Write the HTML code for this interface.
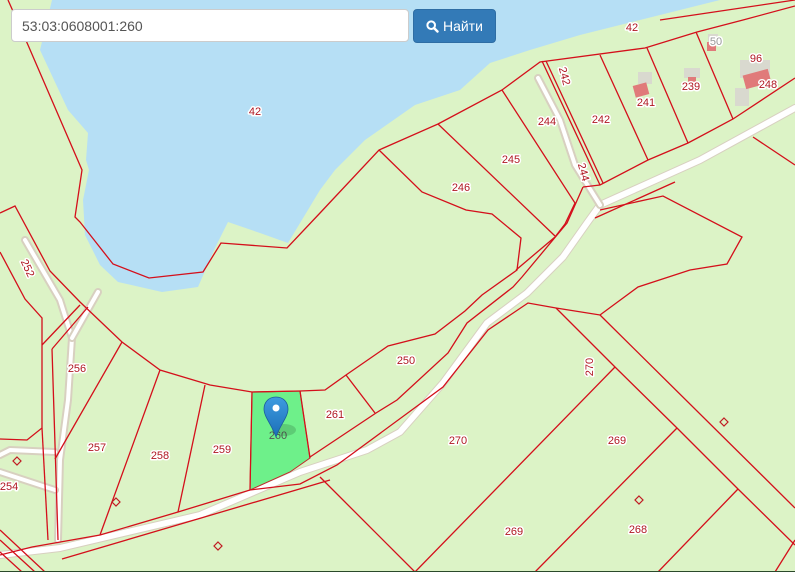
<!DOCTYPE html>
<html><head><meta charset="utf-8"><style>
html,body{margin:0;padding:0;width:795px;height:572px;overflow:hidden;background:#dcf3c6;font-family:"Liberation Sans",sans-serif}
svg{position:absolute;left:0;top:0}
.l{fill:none;stroke:#d40f1b;stroke-width:1.3}
.t{font-family:"Liberation Sans",sans-serif;font-size:11px;fill:#b01822;stroke:#fff;stroke-width:3px;paint-order:stroke;stroke-linejoin:round;text-anchor:middle}
.rd{fill:none;stroke:#d8d0c0;stroke-width:8;stroke-linejoin:round;stroke-linecap:round}
.rw{fill:none;stroke:#fff;stroke-width:6;stroke-linejoin:round;stroke-linecap:round}
#inp{position:absolute;left:11px;top:9px;width:398px;height:33px;border:1px solid #ccc;border-radius:4px;background:#fff;box-sizing:border-box;font-size:14px;color:#555;padding:8px 10px;line-height:16px}
#btn{position:absolute;left:413px;top:9px;width:83px;height:34px;border-radius:4px;background:#337ab7;border:1px solid #2e6da4;box-sizing:border-box;color:#fff;font-size:14px;line-height:32px;text-align:center}
</style></head><body>
<svg width="795" height="572" viewBox="0 0 795 572">
<rect width="795" height="572" fill="#dcf3c6"/>
<path d="M52,0 L40,50 L68,110 L88,133 L86,160 L89,170 L83,200 L85,235 L100,265 L118,282 L162,292 L198,287 L215,248 L228,222 L260,233 L288,243 L320,190 L335,170 L365,140 L415,105 L460,90 L490,63 L530,50 L580,35 L640,20 L700,5 L720,0 Z" fill="#b6dff5"/>
<g>
<path class="rd" d="M0,555 L60,548 L200,515 L300,472 L367,450 L400,432 L443,383 L487,323 L527,293 L563,257 L587,223 L600,205 L640,187 L700,160 L795,108"/>
<path class="rw" d="M0,555 L60,548 L200,515 L300,472 L367,450 L400,432 L443,383 L487,323 L527,293 L563,257 L587,223 L600,205 L640,187 L700,160 L795,108"/>
<path class="rd" d="M538,78 L560,120 L575,165 L600,205"/>
<path class="rw" d="M538,78 L560,120 L575,165 L600,205" style="stroke-width:4"/>
<path class="rd" d="M25,240 L60,300 L72,338 L68,400 L60,460 L58,540"/>
<path class="rw" d="M25,240 L60,300 L72,338 L68,400 L60,460 L58,540" style="stroke-width:4"/>
<path class="rd" d="M98,292 L72,338"/><path class="rw" d="M98,292 L72,338" style="stroke-width:4"/>
<path class="rd" d="M0,455 L10,450 L55,452 M0,472 L55,490"/><path class="rw" d="M0,455 L10,450 L55,452 M0,472 L55,490" style="stroke-width:4"/>
</g>
<path d="M252,392 L300,391 L310,458 L290,472 L250,490 Z" fill="#6ef08a" stroke="#c02a2a" stroke-width="1"/>
<g fill="#d9d9cf"><rect x="638" y="72" width="14" height="12"/><rect x="684" y="68" width="16" height="10"/><rect x="740" y="60" width="30" height="18"/><rect x="735" y="88" width="14" height="18"/><rect x="708" y="34" width="10" height="10"/></g>
<g fill="#e07a7a"><rect x="634" y="84" width="14" height="12" transform="rotate(-15 641 90)"/><rect x="707" y="42" width="9" height="9"/><rect x="744" y="72" width="26" height="14" transform="rotate(-15 757 79)"/><rect x="688" y="77" width="8" height="6"/></g>
<g class="l">
<path d="M8,0 L28,45 L82,170 L75,217 L80,222 L113,264 L149,278 L203,272 L221,243 L287,248 L320,213 L379,150 L438,124 L502,90 L540,62 L645,48 L697,32 L743,20 L795,6"/>
<path d="M660,20 L795,0"/>
<path d="M379,150 L422,192 L466,210 L492,214 L521,238 L517,270 L482,295 L465,311 L435,334 L388,346 L346,375 L325,390 L300,391 L252,392 L210,385 L160,370 L122,342 L80,302 L50,271 L15,206 L0,213"/>
<path d="M438,124 L555,236"/><path d="M502,90 L575,203 L565,224 L555,237 L516,270"/>
<path d="M583,187 L567,223 L522,277 L513,287 L467,323 L448,353 L397,400 L376,413 L310,457"/>
<path d="M346,375 L375,413"/>
<path d="M542,61 L600,185"/><path d="M546,61 L603,183"/><path d="M600,55 L648,160"/><path d="M647,48 L688,143"/><path d="M696,32 L733,119"/>
<path d="M583,187 L600,185 L648,160 L688,143 L733,119 L795,78"/>
<path d="M600,210 L663,196 L742,237 L727,264 L690,270 L638,287 L600,315 L556,308 L528,303 L488,330 L443,387 L337,465 L300,484 L250,490 L178,512 L100,535 L32,547 L0,555"/>
<path d="M595,218 L675,182 M753,137 L795,165"/>
<path d="M556,308 L615,367 L677,428 L738,489 L795,545"/>
<path d="M600,315 L795,508"/>
<path d="M615,367 L415,572"/><path d="M677,428 L535,572"/><path d="M738,489 L658,572"/><path d="M795,540 L775,572"/>
<path d="M320,477 L415,572"/>
<path d="M62,559 L330,480"/>
<path d="M252,392 L250,490"/><path d="M300,391 L310,458"/>
<path d="M205,385 L178,512"/><path d="M160,370 L100,535"/><path d="M122,342 L55,459"/>
<path d="M0,252 L25,299 L42,318 L42,428 L27,440 L0,439"/><path d="M42,428 L48,540"/>
<path d="M42,345 L80,305"/><path d="M52,349 L88,307"/><path d="M52,349 L58,540"/>
<path d="M0,530 L45,572 M0,540 L35,572 M0,552 L22,572"/>
</g>
<g fill="none" stroke="#c01a22" stroke-width="1.2">
<path d="M17,457 L21,461 L17,465 L13,461 Z"/><path d="M116,498 L120,502 L116,506 L112,502 Z"/><path d="M218,542 L222,546 L218,550 L214,546 Z"/><path d="M724,418 L728,422 L724,426 L720,422 Z"/><path d="M639,496 L643,500 L639,504 L635,500 Z"/>
</g>
<g class="t">
<text x="632" y="31">42</text><text x="255" y="115">42</text>
<text x="565" y="80" transform="rotate(75 565 76)">242</text>
<text x="547" y="125">244</text><text x="601" y="123">242</text><text x="646" y="106">241</text>
<text x="691" y="90">239</text><text x="768" y="88">248</text><text x="756" y="62">96</text>
<text x="716" y="45" style="fill:#999">50</text>
<text x="511" y="163">245</text><text x="461" y="191">246</text>
<text x="584" y="176" transform="rotate(75 584 172)">244</text>
<text x="28" y="272" transform="rotate(65 28 268)">252</text>
<text x="77" y="372">256</text><text x="97" y="451">257</text><text x="160" y="459">258</text>
<text x="222" y="453">259</text><text x="335" y="418">261</text><text x="406" y="364">250</text>
<text x="458" y="444">270</text><text x="589" y="371" transform="rotate(-90 589 367)">270</text>
<text x="617" y="444">269</text><text x="514" y="535">269</text><text x="638" y="533">268</text>
<text x="9" y="490">254</text>
<text x="278" y="439" style="fill:#555;stroke:none">260</text>
</g>
<ellipse cx="284" cy="430" rx="12" ry="6" fill="#000" opacity="0.15"/>
<defs><linearGradient id="g" x1="0" y1="0" x2="0" y2="1"><stop offset="0" stop-color="#3e9be0"/><stop offset="1" stop-color="#1c6fb8"/></linearGradient></defs>
<path d="M276,397 C268,397 264,403 264,409 C264,417 272,425 276,437 C280,425 288,417 288,409 C288,403 284,397 276,397 Z" fill="url(#g)" stroke="#1b5f9c" stroke-width="0.8"/>
<circle cx="276" cy="408" r="3.5" fill="#fff"/>
<line x1="0" y1="571.5" x2="795" y2="571.5" stroke="#2b4a2b" stroke-width="1"/>
</svg>
<div id="inp">53:03:0608001:260</div>
<div id="btn"><svg width="13" height="13" viewBox="0 0 13 13" style="position:relative;left:0;top:2px;display:inline-block;vertical-align:baseline"><circle cx="5.2" cy="5.2" r="3.8" fill="none" stroke="#fff" stroke-width="2"/><line x1="8" y1="8" x2="11.5" y2="11.5" stroke="#fff" stroke-width="2.4" stroke-linecap="round"/></svg> Найти</div>
</body></html>
